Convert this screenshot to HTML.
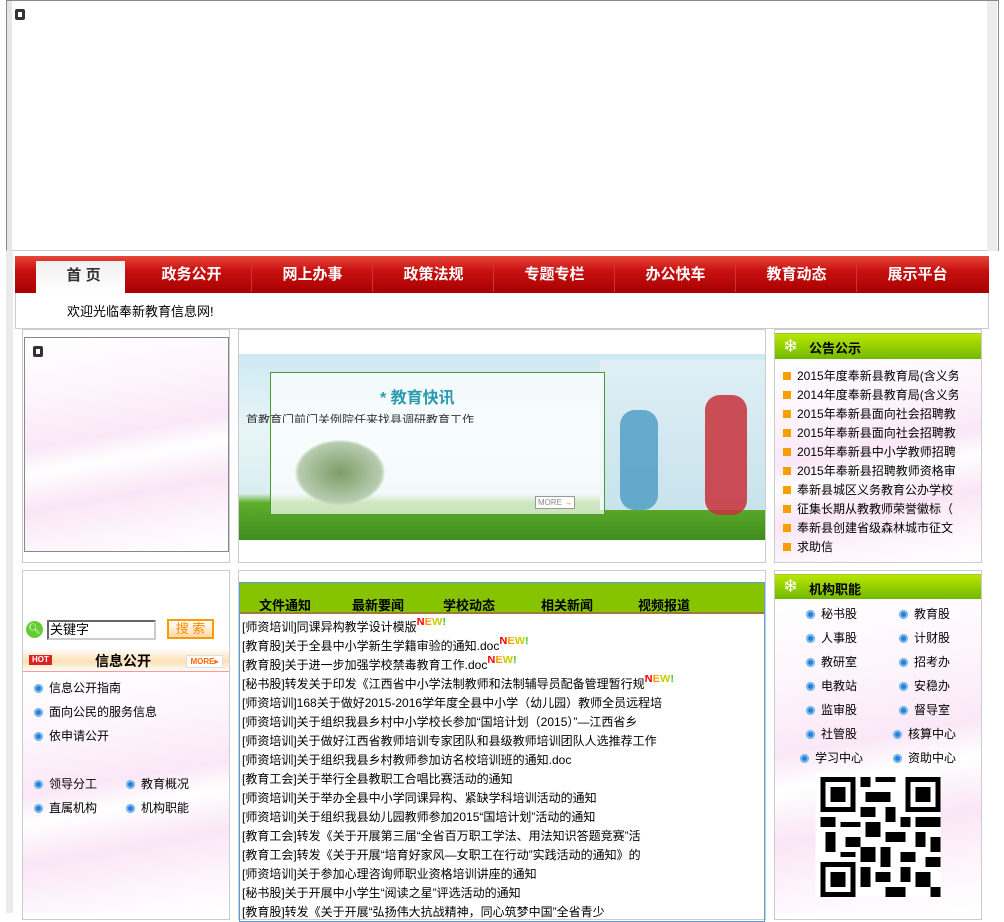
<!DOCTYPE html>
<html><head><meta charset="utf-8">
<style>
*{margin:0;padding:0;box-sizing:border-box}
body{width:1004px;height:913px;overflow:hidden;background:#fff;font-family:"Liberation Sans","Noto Sans CJK SC",sans-serif;font-size:12px;color:#000;position:relative}
.a{position:absolute}
.pink{background:linear-gradient(170deg,#fff 0%,#fdf5fc 25%,#fae8f7 45%,#fff 55%,#fae6f6 70%,#fdf5fc 85%,#fff 100%)}
.nav span{position:absolute;top:0;color:#fff;font-weight:bold;font-size:15px;line-height:37px;width:121px;text-align:center}
.sep{position:absolute;top:6px;width:1px;height:30px;background:#c33}
.gh{background:linear-gradient(#b8e600,#72b800);border-top:1px solid #9c3}
.gh b{position:absolute;left:34px;top:4px;font-size:13px}
.list div{height:19px;line-height:19px;white-space:nowrap;font-size:12px;overflow:hidden}
.dot{display:inline-block;width:9px;height:9px;border-radius:50%;background:#2a7fd4;margin-right:6px;vertical-align:-1px;box-shadow:inset 0 0 0 2px #7bbcf2}
.arr{display:inline-block;width:8px;height:8px;background:#f5a000;margin-right:6px;vertical-align:0}
.new{color:#f00;font-weight:bold;font-size:11px;position:relative;top:-6px;line-height:10px}
.new i{font-style:normal;color:#f90}.new u{text-decoration:none;color:#cc0}.new s{text-decoration:none;color:#3c3}
</style></head><body>
<div class="a" style="left:6px;top:0;width:993px;height:251px;border:1px solid #888;border-bottom-color:#ccc"></div>
<div class="a" style="left:7px;top:1px;width:5px;height:250px;background:#e6e6e6"></div>
<div class="a" style="left:987px;top:1px;width:10px;height:250px;background:#ececec"></div>
<div class="a" style="left:15px;top:9px;width:10px;height:11px;border:3px solid #333;border-radius:2px"></div>
<div class="a" style="left:6px;top:251px;width:7px;height:662px;background:#ebebeb"></div>
<div class="a nav" style="left:15px;top:256px;width:974px;height:37px;background:linear-gradient(#e8473a,#c81010 40%,#a80000);">
<div class="a" style="left:21px;top:5px;width:89px;height:32px;background:linear-gradient(#f0f0f0,#fff)"></div>
<span style="left:8px;color:#333;font-size:15px;top:1px">首 页</span>
<span style="left:116px">政务公开</span><div class="sep" style="left:236px"></div>
<span style="left:237px">网上办事</span><div class="sep" style="left:357px"></div>
<span style="left:358px">政策法规</span><div class="sep" style="left:478px"></div>
<span style="left:479px">专题专栏</span><div class="sep" style="left:599px"></div>
<span style="left:600px">办公快车</span><div class="sep" style="left:720px"></div>
<span style="left:721px">教育动态</span><div class="sep" style="left:841px"></div>
<span style="left:842px">展示平台</span>
</div>
<div class="a" style="left:15px;top:293px;width:974px;height:36px;border:1px solid #ccc;border-top:none"></div>
<div class="a" style="left:67px;top:301px;font-size:13px">欢迎光临奉新教育信息网!</div>
<div class="a" style="left:22px;top:329px;width:208px;height:234px;border:1px solid #ccc"></div>
<div class="a pink" style="left:24px;top:337px;width:205px;height:215px;border:1px solid #888"></div>
<div class="a" style="left:33px;top:346px;width:10px;height:11px;border:3px solid #333;border-radius:2px"></div>
<div class="a" style="left:238px;top:329px;width:528px;height:234px;border:1px solid #ccc"></div>
<div class="a" style="left:239px;top:354px;width:526px;height:186px;background:linear-gradient(#cde9f2,#e8f5f8 40%,#d9eef0 75%,#5fae2c 80%,#3e8d1e)"></div>
<div class="a" style="left:600px;top:360px;width:165px;height:150px;background:linear-gradient(#dfeff5,#c8e3ec)"></div>
<div class="a" style="left:270px;top:372px;width:335px;height:143px;border:1px solid #4a9a2c;background:rgba(255,255,255,.7)"></div>
<div class="a" style="left:380px;top:384px;color:#2a9ab0;font-weight:bold;font-size:16px">* 教育快讯</div>
<div class="a" style="left:246px;top:411px;font-size:12px;color:#333;height:12px;overflow:hidden">首教育门前门关例院任来找县调研教育工作</div>
<div class="a" style="left:295px;top:440px;width:90px;height:65px;border-radius:50%;background:radial-gradient(#7c9e68,#b8ccb0 65%,transparent 72%)"></div>
<div class="a" style="left:620px;top:410px;width:38px;height:100px;background:#4a9ac4;border-radius:15px;opacity:.8"></div>
<div class="a" style="left:705px;top:395px;width:42px;height:120px;background:#c8303a;border-radius:15px;opacity:.85"></div>
<div class="a" style="left:535px;top:496px;width:40px;height:13px;border:1px solid #999;background:#fff;font-size:8px;color:#888;line-height:11px;padding-left:2px">MORE <span style="color:#f80">→</span></div>
<div class="a" style="left:774px;top:329px;width:208px;height:234px;border:1px solid #ccc"></div>
<div class="a pink" style="left:775px;top:358px;width:206px;height:204px"></div>
<div class="a gh" style="left:775px;top:333px;width:206px;height:26px"><span class="a" style="left:8px;top:2px;color:#fff;font-size:18px">❄</span><b>公告公示</b></div>
<div class="a list" style="left:783px;top:367px;width:175px">
<div><span class="arr"></span>2015年度奉新县教育局(含义务</div>
<div><span class="arr"></span>2014年度奉新县教育局(含义务</div>
<div><span class="arr"></span>2015年奉新县面向社会招聘教</div>
<div><span class="arr"></span>2015年奉新县面向社会招聘教</div>
<div><span class="arr"></span>2015年奉新县中小学教师招聘</div>
<div><span class="arr"></span>2015年奉新县招聘教师资格审</div>
<div><span class="arr"></span>奉新县城区义务教育公办学校</div>
<div><span class="arr"></span>征集长期从教教师荣誉徽标（</div>
<div><span class="arr"></span>奉新县创建省级森林城市征文</div>
<div><span class="arr"></span>求助信</div>
</div>
<div class="a" style="left:22px;top:570px;width:208px;height:350px;border:1px solid #ccc"></div>
<div class="a pink" style="left:23px;top:672px;width:206px;height:241px"></div>
<div class="a" style="left:26px;top:621px;width:17px;height:17px;border-radius:50%;background:#6c3;color:#fff;font-size:10px;text-align:center;line-height:17px">🔍︎</div>
<div class="a" style="left:47px;top:620px;width:109px;height:20px;border:2px solid #666;border-right-color:#ccc;border-bottom-color:#ccc;font-size:13px;line-height:15px;padding-left:1px">关键字</div>
<div class="a" style="left:167px;top:619px;width:47px;height:20px;border:2px solid #f90;background:linear-gradient(#fff,#fdd9a8);color:#f80;font-size:13px;text-align:center;line-height:16px">搜 索</div>
<div class="a" style="left:23px;top:648px;width:206px;height:24px;background:linear-gradient(#fff,#fde0b5 60%,#fff);border-bottom:1px solid #f99"></div>
<div class="a" style="left:29px;top:655px;background:#d22;color:#fff;font-size:8px;font-weight:bold;padding:0 3px;line-height:10px">HOT</div>
<div class="a" style="left:95px;top:651px;font-weight:bold;font-size:14px">信息公开</div>
<div class="a" style="left:186px;top:655px;width:37px;height:13px;background:#fff;border:1px solid #ddd;color:#f60;font-size:8px;font-weight:bold;line-height:11px;text-align:center">MORE▸</div>
<div class="a" style="left:34px;top:676px;line-height:24px;font-size:12px">
<div><span class="dot"></span>信息公开指南</div><div><span class="dot"></span>面向公民的服务信息</div><div><span class="dot"></span>依申请公开</div></div>
<div class="a" style="left:34px;top:772px;line-height:24px"><div><span class="dot"></span>领导分工</div><div><span class="dot"></span>直属机构</div></div>
<div class="a" style="left:126px;top:772px;line-height:24px"><div><span class="dot"></span>教育概况</div><div><span class="dot"></span>机构职能</div></div>
<div class="a" style="left:238px;top:570px;width:528px;height:350px;border:1px solid #ccc"></div>
<div class="a" style="left:239px;top:582px;width:526px;height:340px;border:1px solid #5a9ee0"></div>
<div class="a" style="left:240px;top:583px;width:524px;height:31px;background:#86c300;border-bottom:2px solid #a07a3a"></div>
<div class="a" style="left:240px;top:595px;width:524px;font-weight:bold;font-size:13px">
<span class="a" style="left:19px">文件通知</span><span class="a" style="left:112px">最新要闻</span><span class="a" style="left:203px">学校动态</span><span class="a" style="left:301px">相关新闻</span><span class="a" style="left:398px">视频报道</span></div>
<div class="a list" style="left:242px;top:618px;width:520px">
<div>[师资培训]同课异构教学设计模版<span class="new">N<i>E</i><u>W</u><s>!</s></span></div>
<div>[教育股]关于全县中小学新生学籍审验的通知.doc<span class="new">N<i>E</i><u>W</u><s>!</s></span></div>
<div>[教育股]关于进一步加强学校禁毒教育工作.doc<span class="new">N<i>E</i><u>W</u><s>!</s></span></div>
<div>[秘书股]转发关于印发《江西省中小学法制教师和法制辅导员配备管理暂行规<span class="new">N<i>E</i><u>W</u><s>!</s></span></div>
<div>[师资培训]168关于做好2015-2016学年度全县中小学（幼儿园）教师全员远程培</div>
<div>[师资培训]关于组织我县乡村中小学校长参加“国培计划（2015）”—江西省乡</div>
<div>[师资培训]关于做好江西省教师培训专家团队和县级教师培训团队人选推荐工作</div>
<div>[师资培训]关于组织我县乡村教师参加访名校培训班的通知.doc</div>
<div>[教育工会]关于举行全县教职工合唱比赛活动的通知</div>
<div>[师资培训]关于举办全县中小学同课异构、紧缺学科培训活动的通知</div>
<div>[师资培训]关于组织我县幼儿园教师参加2015“国培计划”活动的通知</div>
<div>[教育工会]转发《关于开展第三届“全省百万职工学法、用法知识答题竞赛”活</div>
<div>[教育工会]转发《关于开展“培育好家风—女职工在行动”实践活动的通知》的</div>
<div>[师资培训]关于参加心理咨询师职业资格培训讲座的通知</div>
<div>[秘书股]关于开展中小学生“阅读之星”评选活动的通知</div>
<div>[教育股]转发《关于开展“弘扬伟大抗战精神，同心筑梦中国”全省青少</div>
</div>
<div class="a" style="left:774px;top:570px;width:208px;height:350px;border:1px solid #ccc"></div>
<div class="a pink" style="left:775px;top:598px;width:206px;height:315px"></div>
<div class="a gh" style="left:775px;top:574px;width:206px;height:25px"><span class="a" style="left:8px;top:1px;color:#fff;font-size:18px">❄</span><b>机构职能</b></div>
<div class="a" style="left:806px;top:602px;line-height:24px"><div><span class="dot"></span>秘书股</div><div><span class="dot"></span>人事股</div><div><span class="dot"></span>教研室</div><div><span class="dot"></span>电教站</div><div><span class="dot"></span>监审股</div><div><span class="dot"></span>社管股</div></div>
<div class="a" style="left:800px;top:746px;line-height:24px"><div><span class="dot"></span>学习中心</div></div>
<div class="a" style="left:899px;top:602px;line-height:24px"><div><span class="dot"></span>教育股</div><div><span class="dot"></span>计财股</div><div><span class="dot"></span>招考办</div><div><span class="dot"></span>安稳办</div><div><span class="dot"></span>督导室</div></div>
<div class="a" style="left:893px;top:722px;line-height:24px"><div><span class="dot"></span>核算中心</div><div><span class="dot"></span>资助中心</div></div>
<svg class="a" style="left:814px;top:772px" width="128" height="125" viewBox="0 0 25 25" shape-rendering="crispEdges">
<rect width="25" height="25" fill="#fff"/>
<g fill="#000"><path d="M1 1h7v7h-7zM18 1h7v7h-7zM1 18h7v7h-7z"/></g>
<g fill="#fff"><path d="M2 2h5v5h-5zM19 2h5v5h-5zM2 19h5v5h-5z"/></g>
<g fill="#000"><path d="M3 3h3v3h-3zM20 3h3v3h-3zM3 20h3v3h-3z"/>
<path d="M9 1h2v2h-2zM12 1h4v1h-4zM10 4h5v2h-5zM9 7h3v2h-3zM14 7h2v3h-2zM1 9h3v2h-3zM5 10h4v1h-4zM10 10h3v3h-3zM17 9h2v2h-2zM20 9h5v2h-5zM2 12h2v4h-2zM6 13h3v2h-3zM14 12h4v2h-4zM20 12h2v3h-2zM23 13h2v3h-2zM9 15h3v3h-3zM13 15h2v4h-2zM17 16h3v2h-3zM22 17h3v2h-3zM9 19h2v4h-2zM12 20h3v2h-3zM17 19h2v3h-2zM20 20h3v3h-3zM14 23h4v2h-4zM23 23h2v2h-2zM5 16h3v1h-3z"/></g>
</svg>
</body></html>
